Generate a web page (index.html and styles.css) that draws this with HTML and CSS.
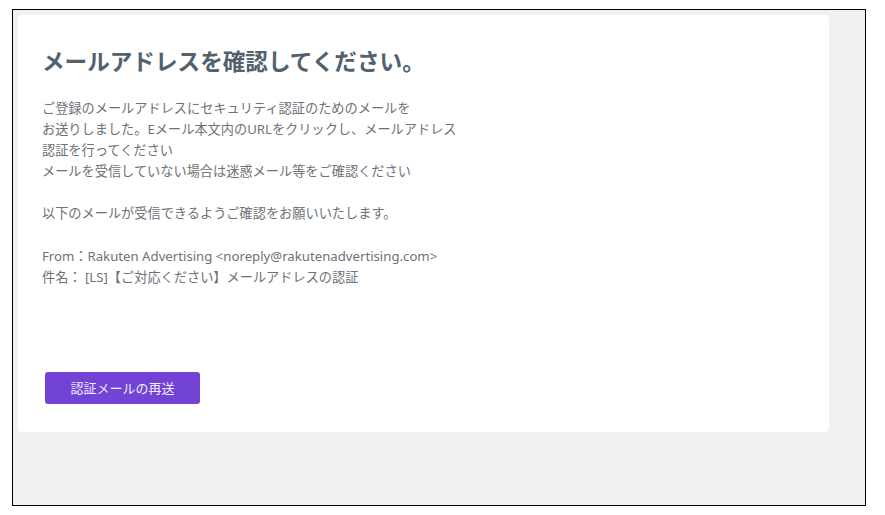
FILE: index.html
```html
<!DOCTYPE html>
<html lang="ja">
<head>
<meta charset="utf-8">
<title>メールアドレスを確認してください。</title>
<link rel="stylesheet" href="styles.css">
</head>
<body>
<div class="frame">
  <main class="card">
    <h1 class="title">メールアドレスを確認してください。</h1>
    <div class="message">
      <p>ご登録のメールアドレスにセキュリティ認証のためのメールを<br>お送りしました。Eメール本文内のURLをクリックし、メールアドレス<br>認証を行ってください<br>メールを受信していない場合は迷惑メール等をご確認ください</p>
      <p>以下のメールが受信できるようご確認をお願いいたします。</p>
      <p>From：Rakuten Advertising &lt;noreply@rakutenadvertising.com&gt;<br>件名：&nbsp;[LS]【ご対応ください】メールアドレスの認証</p>
    </div>
    <button class="resend" type="button">認証メールの再送</button>
  </main>
</div>
</body>
</html>
```
FILE: styles.css
```css
* { box-sizing: border-box; }
html, body { margin: 0; padding: 0; background: #ffffff; }
body {
  padding: 9px 19px 9px 12px;
  font-family: "Noto Sans", "Noto Sans CJK JP", sans-serif;
}
.frame {
  height: 497px;
  border: 1px solid #000;
  background: #f1f1f1;
  padding: 5px 36px 0 5px;
}
.card {
  height: 417px;
  background: #fff;
  border-radius: 4px;
  padding: 30px 24px 0 24px;
}
.title {
  margin: 0;
  font-size: 22.6px;
  line-height: 32px;
  font-weight: 700;
  color: #52616c;
  font-family: "Noto Sans CJK JP", sans-serif;
}
.message {
  margin-top: 21px;
  font-size: 13.2px;
  line-height: 21.1px;
  color: #6e7277;
}
.message p { margin: 0 0 21.1px 0; }
.message p:last-child { margin-bottom: 0; }
.resend {
  display: block;
  margin: 84px 0 0 3px;
  width: 155px;
  height: 32px;
  border: none;
  border-radius: 3px;
  background: #7343d6;
  color: #f1ebfc;
  font-family: "Noto Sans CJK JP", sans-serif;
  font-size: 13px;
  padding: 0;
  cursor: pointer;
}
```
